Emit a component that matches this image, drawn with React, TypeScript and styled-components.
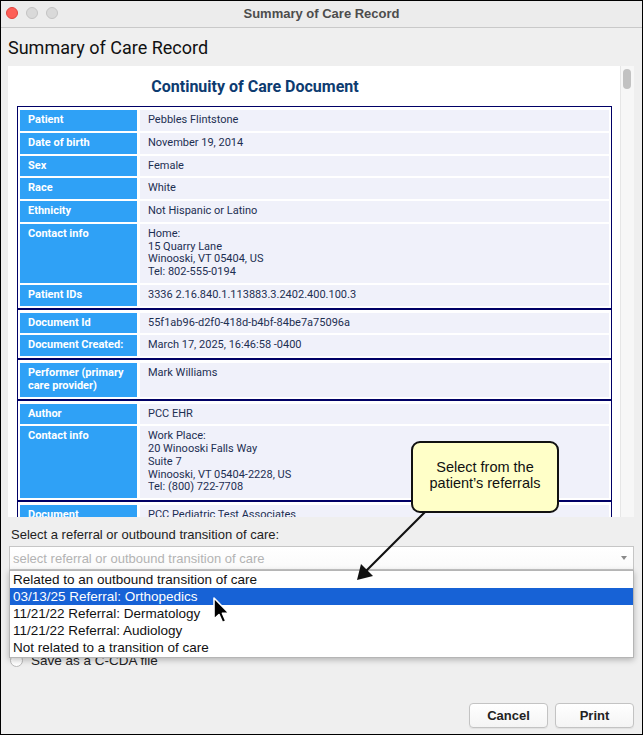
import React from "react";
import styled, { createGlobalStyle } from "styled-components";

const Global = createGlobalStyle`
  html, body { margin: 0; padding: 0; background: #ffffff; }
  * { box-sizing: border-box; }
`;

const Window = styled.div`
  position: relative;
  width: 643px;
  height: 735px;
  border: 1px solid #000;
  background: #efefef;
  display: flex;
  flex-direction: column;
  overflow: hidden;
  font-family: "Liberation Sans", Arial, sans-serif;
`;

const TitleBar = styled.div`
  position: relative;
  height: 27px;
  flex: none;
  background: #ececec;
  border-bottom: 1px solid #c9c9c9;
  display: flex;
  align-items: center;
  justify-content: center;
`;

const Lights = styled.div`
  position: absolute;
  left: 5px;
  top: 6px;
  display: flex;
  gap: 8px;
`;

const Light = styled.span<{ $c: string; $b: string }>`
  width: 12px;
  height: 12px;
  border-radius: 50%;
  background: ${(p) => p.$c};
  border: 0.5px solid ${(p) => p.$b};
`;

const TitleText = styled.div`
  font-size: 13px;
  font-weight: bold;
  color: #4d4d4d;
  margin-top: -1px;
`;

const Body = styled.div`
  flex: 1;
  display: flex;
  flex-direction: column;
  padding: 9px 7px 0 7px;
`;

const Heading = styled.h1`
  margin: 0 0 7px 0;
  font-family: Roboto, "Noto Sans", sans-serif;
  font-weight: 400;
  font-size: 18px;
  line-height: 22px;
  color: #111;
`;

const Panel = styled.div`
  height: 451px;
  width: 626px;
  display: flex;
  background: #fff;
  overflow: hidden;
  flex: none;
`;

const DocArea = styled.div`
  flex: 1;
  padding: 11px 8px 0 9px;
  font-family: Roboto, "Noto Sans", sans-serif;
`;

const DocTitle = styled.div`
  width: 476px;
  text-align: center;
  font-weight: bold;
  font-size: 16px;
  line-height: 20px;
  color: #0d3b70;
  margin-bottom: 9px;
`;

const Scrollbar = styled.div`
  width: 14px;
  flex: none;
  background: #f7f7f7;
  border-left: 1px solid #e6e6e6;
  padding: 3px 0 0 2px;
`;

const Thumb = styled.div`
  width: 8px;
  height: 20px;
  border-radius: 4px;
  background: #c2c2c2;
`;

const Group = styled.div`
  border: 1px solid #000066;
  padding: 3px 2px 2px 2px;
  display: grid;
  grid-template-columns: 117px 1fr;
  column-gap: 3px;
  row-gap: 2px;
`;

const Label = styled.div`
  background: #2fa1f6;
  color: #fff;
  font-weight: bold;
  font-size: 11px;
  line-height: 12.75px;
  padding: 4px 8px;
`;

const Value = styled.div`
  background: #f0f1fa;
  color: #1d2f52;
  font-size: 11px;
  line-height: 12.75px;
  padding: 4px 8px;
`;

const SelectLabel = styled.div`
  margin: 10px 0 3px 3px;
  font-size: 13px;
  line-height: 16px;
  color: #222;
`;

const ComboWrap = styled.div`
  position: relative;
  margin-left: 1px;
  width: 625px;
`;

const Combo = styled.div`
  height: 24px;
  border: 1px solid #c6c6c6;
  background: linear-gradient(#ffffff, #fafafa);
  display: flex;
  align-items: center;
  padding-left: 3px;
  font-size: 13px;
  color: #b3b3b3;
`;

const Arrow = styled.span`
  position: absolute;
  right: 7px;
  top: 10px;
  width: 0;
  height: 0;
  border-left: 3.5px solid transparent;
  border-right: 3.5px solid transparent;
  border-top: 4px solid #8a8a8a;
`;

const List = styled.div`
  position: absolute;
  left: 0;
  top: 24px;
  width: 625px;
  background: #fff;
  border: 1px solid #b5b5b5;
  box-shadow: 0 2px 6px rgba(0, 0, 0, 0.25);
  z-index: 2;
  padding: 0 0 1px 0;
`;

const Item = styled.div<{ $sel?: boolean }>`
  height: 17px;
  line-height: 17px;
  padding-left: 3px;
  font-size: 13.5px;
  color: ${(p) => (p.$sel ? "#fff" : "#111")};
  background: ${(p) => (p.$sel ? "#1762d6" : "transparent")};
`;

const Radios = styled.div`
  margin-top: 81px;
  display: flex;
  flex-direction: column;
  gap: 4px;
  padding-left: 2px;
`;

const RadioRow = styled.label`
  display: flex;
  align-items: center;
  gap: 8px;
  font-size: 13.5px;
  color: #222;
  height: 18px;
`;

const RadioDot = styled.span`
  width: 13px;
  height: 13px;
  border-radius: 50%;
  border: 1px solid #b9b9b9;
  background: #fff;
`;

const Footer = styled.div`
  margin-top: auto;
  margin-bottom: 6px;
  display: flex;
  justify-content: flex-end;
  gap: 7px;
  padding-right: 1px;
`;

const Button = styled.button`
  width: 79px;
  height: 25px;
  border: 1px solid #c3c3c3;
  border-radius: 4px;
  background: linear-gradient(#ffffff, #f4f4f4);
  font-family: "Liberation Sans", Arial, sans-serif;
  font-weight: bold;
  font-size: 13px;
  color: #222;
  box-shadow: 0 1px 1px rgba(0, 0, 0, 0.06);
`;

const Callout = styled.div`
  position: absolute;
  left: 410px;
  top: 440px;
  width: 148px;
  height: 72px;
  border: 2px solid #111;
  border-radius: 9px;
  background: #ffffc8;
  display: flex;
  align-items: center;
  justify-content: center;
  text-align: center;
  padding-bottom: 4px;
  font-family: "Liberation Sans", Arial, sans-serif;
  font-size: 14.5px;
  line-height: 16.5px;
  color: #111;
  z-index: 5;
`;

const Overlay = styled.svg`
  position: absolute;
  left: 0;
  top: 0;
  z-index: 4;
  pointer-events: none;
`;

const CursorSvg = styled.svg`
  position: absolute;
  left: 210px;
  top: 595px;
  z-index: 6;
`;

type Row = { l: string; v: string[] };

const groups: Row[][] = [
  [
    { l: "Patient", v: ["Pebbles Flintstone"] },
    { l: "Date of birth", v: ["November 19, 2014"] },
    { l: "Sex", v: ["Female"] },
    { l: "Race", v: ["White"] },
    { l: "Ethnicity", v: ["Not Hispanic or Latino"] },
    {
      l: "Contact info",
      v: ["Home:", "15 Quarry Lane", "Winooski, VT 05404, US", "Tel: 802-555-0194"],
    },
    { l: "Patient IDs", v: ["3336 2.16.840.1.113883.3.2402.400.100.3"] },
  ],
  [
    { l: "Document Id", v: ["55f1ab96-d2f0-418d-b4bf-84be7a75096a"] },
    { l: "Document Created:", v: ["March 17, 2025, 16:46:58 -0400"] },
  ],
  [{ l: "Performer (primary care provider)", v: ["Mark Williams"] }],
  [
    { l: "Author", v: ["PCC EHR"] },
    {
      l: "Contact info",
      v: [
        "Work Place:",
        "20 Winooski Falls Way",
        "Suite 7",
        "Winooski, VT 05404-2228, US",
        "Tel: (800) 722-7708",
      ],
    },
  ],
  [{ l: "Document Custodian", v: ["PCC Pediatric Test Associates"] }],
];

const items = [
  "Related to an outbound transition of care",
  "03/13/25 Referral: Orthopedics",
  "11/21/22 Referral: Dermatology",
  "11/21/22 Referral: Audiology",
  "Not related to a transition of care",
];

export default function App() {
  return (
    <>
      <Global />
      <Window>
        <TitleBar>
          <Lights>
            <Light $c="#fe5f57" $b="#e0443e" />
            <Light $c="#d9d9d9" $b="#c4c4c4" />
            <Light $c="#d9d9d9" $b="#c4c4c4" />
          </Lights>
          <TitleText>Summary of Care Record</TitleText>
        </TitleBar>
        <Body>
          <Heading>Summary of Care Record</Heading>
          <Panel>
            <DocArea>
              <DocTitle>Continuity of Care Document</DocTitle>
              {groups.map((g, gi) => (
                <Group key={gi}>
                  {g.map((r, ri) => (
                    <React.Fragment key={ri}>
                      <Label>{r.l}</Label>
                      <Value>
                        {r.v.map((line, li) => (
                          <div key={li}>{line}</div>
                        ))}
                      </Value>
                    </React.Fragment>
                  ))}
                </Group>
              ))}
            </DocArea>
            <Scrollbar>
              <Thumb />
            </Scrollbar>
          </Panel>
          <SelectLabel>Select a referral or outbound transition of care:</SelectLabel>
          <ComboWrap>
            <Combo>select referral or outbound transition of care</Combo>
            <Arrow />
            <List>
              {items.map((t, i) => (
                <Item key={i} $sel={i === 1}>
                  {t}
                </Item>
              ))}
            </List>
          </ComboWrap>
          <Radios>
            <RadioRow>
              <RadioDot />
              Save as a C-CDA file
            </RadioRow>
          </Radios>
          <Footer>
            <Button>Cancel</Button>
            <Button>Print</Button>
          </Footer>
        </Body>
        <Callout>
          Select from the
          <br />
          patient’s referrals
        </Callout>
        <Overlay width="643" height="735" viewBox="0 0 643 735">
          <line x1="424" y1="511" x2="364" y2="571" stroke="#111" strokeWidth="2.2" />
          <polygon points="356,579 360,563 372,575" fill="#111" />
        </Overlay>
        <CursorSvg width="22" height="30" viewBox="0 0 22 30">
          <path
            d="M3 2 L3 23 L8 18.5 L11.5 26.5 L14.8 25 L11.4 17.3 L18 17.3 Z"
            fill="#000"
            stroke="#fff"
            strokeWidth="1.6"
            strokeLinejoin="round"
          />
        </CursorSvg>
      </Window>
    </>
  );
}
